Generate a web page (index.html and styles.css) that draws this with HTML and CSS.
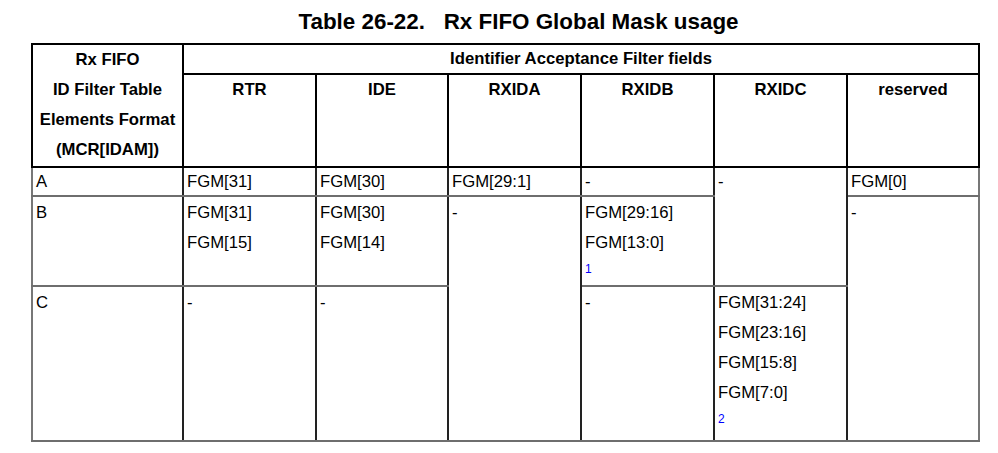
FILE: index.html
```html
<!DOCTYPE html>
<html>
<head>
<meta charset="utf-8">
<link rel="stylesheet" href="styles.css">
</head>
<body>
<h1 class="title">Table 26-22.&nbsp;&nbsp;&nbsp;Rx FIFO Global Mask usage</h1>
<table class="grid">
  <colgroup>
    <col class="c-first">
    <col class="c-a">
    <col class="c-b">
    <col class="c-a">
    <col class="c-a">
    <col class="c-a">
    <col class="c-b">
  </colgroup>
  <thead>
    <tr class="h1">
      <th rowspan="2" class="stub">Rx FIFO<br>ID Filter Table<br>Elements Format<br>(MCR[IDAM])</th>
      <th colspan="6" class="group">Identifier Acceptance Filter fields</th>
    </tr>
    <tr class="h2">
      <th>RTR</th>
      <th>IDE</th>
      <th>RXIDA</th>
      <th>RXIDB</th>
      <th>RXIDC</th>
      <th>reserved</th>
    </tr>
  </thead>
  <tbody>
    <tr class="ra">
      <td>A</td>
      <td>FGM[31]</td>
      <td>FGM[30]</td>
      <td>FGM[29:1]</td>
      <td>-</td>
      <td rowspan="2">-</td>
      <td>FGM[0]</td>
    </tr>
    <tr class="rb">
      <td>B</td>
      <td>FGM[31]<br>FGM[15]</td>
      <td>FGM[30]<br>FGM[14]</td>
      <td rowspan="2">-</td>
      <td>FGM[29:16]<br>FGM[13:0]<div class="fn">1</div></td>
      <td rowspan="2">-</td>
    </tr>
    <tr class="rc">
      <td>C</td>
      <td>-</td>
      <td>-</td>
      <td>-</td>
      <td>FGM[31:24]<br>FGM[23:16]<br>FGM[15:8]<br>FGM[7:0]<div class="fn">2</div></td>
    </tr>
  </tbody>
</table>
</body>
</html>
```
FILE: styles.css
```css
html, body {
  margin: 0;
  padding: 0;
  background: #fff;
}
body {
  padding: 9px 0 0 31px;
  font-family: "Liberation Sans", Arial, sans-serif;
  color: #000;
}
.title {
  margin: 0 0 9px 0;
  padding-left: 14px;
  width: 947px;
  text-align: center;
  font-size: 22.4px;
  font-weight: bold;
  line-height: 25px;
  white-space: nowrap;
}
.grid {
  border-collapse: collapse;
  table-layout: fixed;
  width: 949px;
  font-size: 16.7px;
  line-height: 30px;
}
.c-first { width: 151px; }
.c-a { width: 133px; }
.c-b { width: 132px; }
.grid th {
  border: 2px solid #000;
  font-weight: bold;
  text-align: center;
  vertical-align: top;
  padding: 0 1px;
  white-space: nowrap;
}
.grid th.group {
  line-height: 27px;
}
.grid td {
  border: 2px solid #6e6e6e;
  border-left: 2px solid #222;
  border-right: 2px solid #222;
  vertical-align: top;
  padding: 0 3px;
  text-align: left;
}
.grid tr > td:first-child {
  border-left-color: #777;
}
.grid tr > td:last-child {
  border-right-color: #777;
}
.h1 { height: 30px; }
.h2 { height: 93px; }
.ra { height: 29px; }
.ra td { line-height: 27px; }
.rb { height: 90px; }
.rb td, .rc td { padding-top: 1px; }
.rc { height: 155px; }
.fn {
  color: #0000ff;
  font-size: 12px;
  line-height: 22px;
}
```
